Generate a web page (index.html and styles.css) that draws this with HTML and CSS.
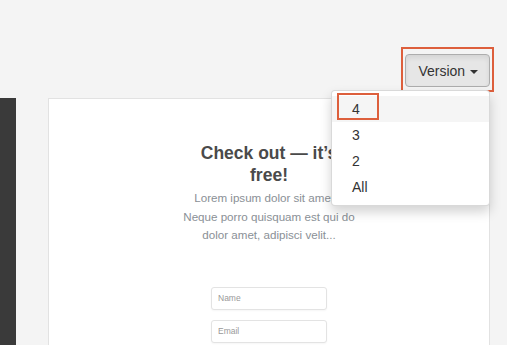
FILE: index.html
```html
<!doctype html>
<html lang="en">
    <head>
        <meta charset="UTF-8" />
        <meta name="viewport" content="width=device-width, initial-scale=1.0" />
        <title>Version picker</title>
        <link rel="stylesheet" href="styles.css">
    </head>
    <body>
        <div class="toolbar">
            <div class="mark version-mark">
                <button class="btn-version">Version <span class="caret"></span></button>
                <ul class="dropdown">
                    <li class="active">
                        <span class="mark item-mark"></span>
                        <a href="#">4</a>
                    </li>
                    <li><a href="#">3</a></li>
                    <li><a href="#">2</a></li>
                    <li><a href="#">All</a></li>
                </ul>
            </div>
        </div>
        <div class="main">
            <div class="sidebar"></div>
            <div class="card">
                <div class="content">
                    <h2>Check out — it’s free!</h2>
                    <p>Lorem ipsum dolor sit amet...<br />Neque porro quisquam est qui do<br />dolor amet, adipisci velit...</p>
                    <form class="signup">
                        <input type="text" placeholder="Name" />
                        <input type="text" placeholder="Email" />
                    </form>
                </div>
            </div>
        </div>
    </body>
</html>
```

FILE: styles.css
```css
body {
    font-family: "Liberation Sans", Arial, sans-serif;
    background-color: #f4f4f4;
    margin: 0;
    padding: 0;
    color: #333;
    overflow: hidden;
}

.toolbar {
    height: 98px;
    display: flex;
    justify-content: flex-end;
    align-items: flex-start;
    padding-right: 13px;
    box-sizing: border-box;
}

.mark {
    border: 2px solid #dd5f3c;
}

.version-mark {
    position: relative;
    margin-top: 47px;
    padding: 5px 2px 3px 2px;
    display: flex;
}

.btn-version {
    font-family: "Liberation Sans", Arial, sans-serif;
    font-size: 14px;
    line-height: 20px;
    color: #333;
    background-color: #e6e6e6;
    border: 1px solid #adadad;
    border-radius: 4px;
    padding: 6px 11px 5px 12px;
    box-shadow: inset 0 3px 5px rgba(0, 0, 0, 0.08);
    cursor: pointer;
}

.caret {
    display: inline-block;
    width: 0;
    height: 0;
    margin-left: 1px;
    vertical-align: middle;
    border-top: 4px solid #333;
    border-left: 4px solid transparent;
    border-right: 4px solid transparent;
}

.dropdown {
    position: absolute;
    top: 41px;
    right: 2px;
    width: 159px;
    box-sizing: border-box;
    margin: 0;
    padding: 5px 0;
    list-style: none;
    background: #fff;
    border: 1px solid rgba(0, 0, 0, 0.15);
    border-radius: 4px;
    box-shadow: 0 6px 12px rgba(0, 0, 0, 0.175);
    z-index: 10;
}

.dropdown li {
    position: relative;
}

.dropdown a {
    display: block;
    padding: 3px 20px;
    font-size: 14px;
    line-height: 20px;
    color: #333;
    text-decoration: none;
}

.dropdown li.active {
    background-color: #f5f5f5;
}

.item-mark {
    position: absolute;
    top: -3px;
    left: 5px;
    width: 38px;
    height: 23px;
}

.main {
    display: flex;
    gap: 32px;
}

.sidebar {
    width: 16px;
    height: 260px;
    background-color: #3a3a3a;
}

.card {
    width: 442px;
    height: 260px;
    background: #fff;
    border: 1px solid #e2e2e2;
    border-bottom: none;
    box-sizing: border-box;
    display: flex;
    justify-content: center;
}

.content {
    width: 200px;
    padding-top: 43px;
    text-align: center;
}

.content h2 {
    margin: 0;
    font-size: 17.5px;
    line-height: 22px;
    font-weight: 700;
    color: #4a4a4a;
    padding: 0 18px;
}

.content p {
    margin: 3px 0 0 0;
    font-size: 11.6px;
    line-height: 18.5px;
    color: #8a9096;
}

.signup {
    margin-top: 42px;
    display: flex;
    flex-direction: column;
    align-items: center;
    gap: 10px;
}

.signup input {
    width: 116px;
    height: 23px;
    box-sizing: border-box;
    padding: 0 6px;
    font-family: "Liberation Sans", Arial, sans-serif;
    font-size: 8.5px;
    border: 1px solid #e3e3e3;
    border-radius: 3px;
    box-shadow: 0 1px 2px rgba(0, 0, 0, 0.04);
}

.signup input::placeholder {
    color: #999;
}
```
